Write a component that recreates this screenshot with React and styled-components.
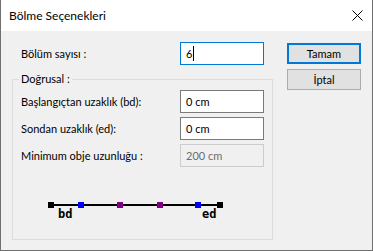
import React from 'react'
import styled, { createGlobalStyle } from 'styled-components'

const Global = createGlobalStyle`
  html, body {
    margin: 0;
    padding: 0;
    background: #ffffff;
  }
  body {
    font-family: Lato, "Noto Sans", sans-serif;
    font-size: 11px;
    color: #000000;
  }
`

const Window = styled.div`
  width: 373px;
  height: 251px;
  box-sizing: border-box;
  border: 1px solid #707070;
  border-top: none;
  display: flex;
  flex-direction: column;
  background: #f0f0f0;
`

const TitleBar = styled.div`
  height: 31px;
  flex: none;
  background: #ffffff;
  display: flex;
  align-items: center;
  justify-content: space-between;
  padding: 0 9px 0 8px;
`

const Title = styled.span`
  font-size: 12px;
`

const CloseButton = styled.div`
  width: 12px;
  height: 12px;
  display: flex;
  align-items: center;
  justify-content: center;
`

const Body = styled.div`
  flex: 1;
  display: flex;
  padding: 11px 0 0 11px;
`

const Column = styled.div`
  width: 261px;
  display: flex;
  flex-direction: column;
`

const Buttons = styled.div`
  margin-left: 14px;
  padding-top: 1px;
  display: flex;
  flex-direction: column;
  gap: 5px;
`

const Button = styled.div`
  width: 74px;
  height: 21px;
  box-sizing: border-box;
  background: #e1e1e1;
  border: ${p => (p.$default ? '2px solid #0078d7' : '1px solid #adadad')};
  display: flex;
  align-items: center;
  justify-content: center;
`

const Row = styled.div`
  display: grid;
  grid-template-columns: ${p => p.$labelWidth}px 84px;
  align-items: center;
  padding-left: ${p => p.$indent}px;
`

const Label = styled.span`
  white-space: nowrap;
`

const Field = styled.div`
  height: 23px;
  box-sizing: border-box;
  display: flex;
  align-items: center;
  padding-left: 5px;
  background: ${p => (p.$disabled ? '#f0f0f0' : '#ffffff')};
  border: 1px solid ${p => (p.$focused ? '#0078d7' : p.$disabled ? '#cccccc' : '#7a7a7a')};
  color: ${p => (p.$disabled ? '#6d6d6d' : '#000000')};
`

const Caret = styled.span`
  width: 1px;
  height: 15px;
  margin-left: 1px;
  background: #000000;
`

const Group = styled.div`
  position: relative;
  margin-top: 14px;
  height: 161px;
  box-sizing: border-box;
  border: 1px solid #dcdcdc;
  padding: 10px 8px 0 8px;
  display: flex;
  flex-direction: column;
  gap: 4px;
`

const Legend = styled.span`
  position: absolute;
  top: -8px;
  left: 6px;
  padding: 0 2px;
  background: #f0f0f0;
`

const Diagram = styled.svg`
  display: block;
  margin: 25px 0 0 18px;
  width: 190px;
  height: 25px;
`

const squares = [
  { x: 9, color: '#000000' },
  { x: 39, color: '#0000ff' },
  { x: 78, color: '#800080' },
  { x: 118, color: '#800080' },
  { x: 156, color: '#0000ff' },
  { x: 178, color: '#000000' },
]

const rows = [
  { label: 'Başlangıçtan uzaklık (bd):', value: '0 cm' },
  { label: 'Sondan uzaklık (ed):', value: '0 cm' },
  { label: 'Minimum obje uzunluğu :', value: '200 cm', disabled: true },
]

const App = () => {
  return (
    <>
      <Global />
      <Window>
        <TitleBar>
          <Title>Bölme Seçenekleri</Title>
          <CloseButton>
            <svg width="11" height="11" viewBox="0 0 11 11">
              <path d="M0.5 0.5 L10.5 10.5 M10.5 0.5 L0.5 10.5" stroke="#000" strokeWidth="1" />
            </svg>
          </CloseButton>
        </TitleBar>
        <Body>
          <Column>
            <Row $labelWidth={159} $indent={9}>
              <Label>Bölüm sayısı :</Label>
              <Field $focused>
                6<Caret />
              </Field>
            </Row>
            <Group>
              <Legend>Doğrusal :</Legend>
              {rows.map(r => (
                <Row key={r.label} $labelWidth={159} $indent={0}>
                  <Label>{r.label}</Label>
                  <Field $disabled={r.disabled}>{r.value}</Field>
                </Row>
              ))}
              <Diagram viewBox="0 0 190 25">
                <rect x="12" y="8" width="169" height="2" fill="#000" />
                {squares.map(s => (
                  <rect key={s.x} x={s.x} y="6" width="6" height="6" fill={s.color} />
                ))}
                <text x="19" y="22" fontFamily="'DejaVu Sans Mono', monospace" fontWeight="bold" fontSize="12">bd</text>
                <text x="163" y="22" fontFamily="'DejaVu Sans Mono', monospace" fontWeight="bold" fontSize="12">ed</text>
              </Diagram>
            </Group>
          </Column>
          <Buttons>
            <Button $default>Tamam</Button>
            <Button>İptal</Button>
          </Buttons>
        </Body>
      </Window>
    </>
  )
}

export default App
